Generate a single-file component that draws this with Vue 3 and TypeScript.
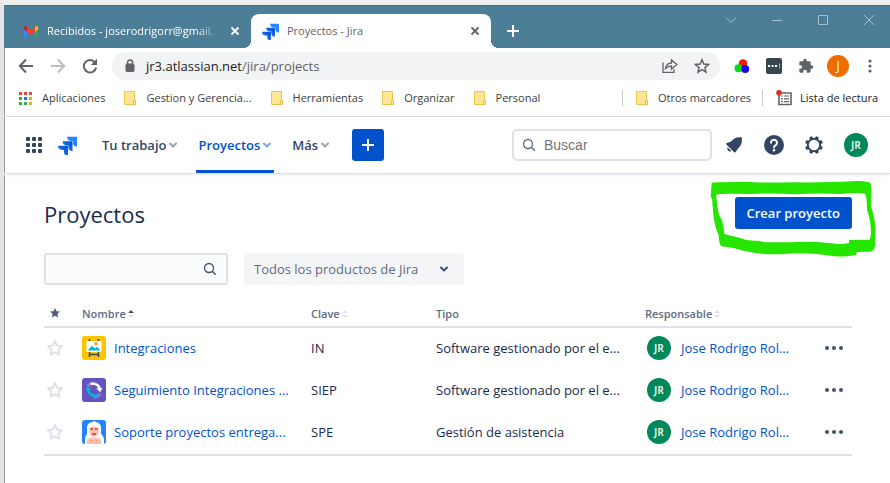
<script setup lang="ts">
import { ref } from 'vue'

interface Project {
  name: string
  key: string
  type: string
  lead: string
  art: 'easel' | 'cycle' | 'yeti'
}

const bookmarks: string[] = ['Gestion y Gerencia...', 'Herramientas', 'Organizar', 'Personal']

const projects: Project[] = [
  { name: 'Integraciones', key: 'IN', type: 'Software gestionado por el e...', lead: 'Jose Rodrigo Rol...', art: 'easel' },
  { name: 'Seguimiento Integraciones ...', key: 'SIEP', type: 'Software gestionado por el e...', lead: 'Jose Rodrigo Rol...', art: 'cycle' },
  { name: 'Soporte proyectos entrega...', key: 'SPE', type: 'Gestión de asistencia', lead: 'Jose Rodrigo Rol...', art: 'yeti' },
]

const query = ref('')
const filter = ref('')
const product = ref('all')
</script>

<template>
  <div class="window">
    <svg class="defs" aria-hidden="true">
      <defs>
        <linearGradient id="jg" x1="1" y1="0" x2="0" y2="1">
          <stop offset="0.1" stop-color="#0052cc" />
          <stop offset="0.9" stop-color="#2684ff" />
        </linearGradient>
        <symbol id="jira" viewBox="0 0 24 24">
          <path fill="#2684ff" d="M23 1H11.500a5.200 5.200 0 0 0 5.200 5.200h2.100v2A5.200 5.200 0 0 0 24 13.400V2a1 1 0 0 0-1-1z" />
          <path fill="url(#jg)" d="M17.300 6.700H5.800A5.200 5.200 0 0 0 11 11.900h2.100V14a5.200 5.200 0 0 0 5.200 5.200V7.700a1 1 0 0 0-1-1z" />
          <path fill="url(#jg)" d="M11.600 12.400H0a5.200 5.200 0 0 0 5.200 5.200h2.200v2a5.200 5.200 0 0 0 5.200 5.200V13.400a1 1 0 0 0-1-1z" />
        </symbol>
        <symbol id="folder" viewBox="0 0 12 14">
          <path d="M.5.5h10v9h1v4H.5z" fill="#ffe694" stroke="#e8c64a" />
          <path d="M9.500 13.500v-4h2" fill="none" stroke="#e8c64a" />
        </symbol>
        <symbol id="chev" viewBox="0 0 10 8">
          <path d="M2 2.500l3 3 3-3" fill="none" stroke="currentColor" stroke-width="2" stroke-linecap="round" stroke-linejoin="round" />
        </symbol>
        <symbol id="lens" viewBox="0 0 14 14">
          <circle cx="6" cy="6" r="4.500" fill="none" stroke="currentColor" stroke-width="1.300" />
          <path d="M9.500 9.500l2.800 2.800" stroke="currentColor" stroke-width="1.500" stroke-linecap="round" />
        </symbol>
        <symbol id="x" viewBox="0 0 10 10">
          <path d="M1.500 1.500l7 7M8.500 1.500l-7 7" stroke="currentColor" stroke-width="1.800" />
        </symbol>
      </defs>
    </svg>

    <div class="tabs">
      <div class="tab">
        <svg width="14" height="11" viewBox="0 0 14 11">
          <path d="M0 2v8q0 1 1 1h2V4z" fill="#4285f4" />
          <path d="M14 2v8q0 1-1 1h-2V4z" fill="#34a853" />
          <path d="M3 1v5l4 3 4-3V1L7 4z" fill="#ea4335" />
          <path d="M0 2Q0 0 1.600 0L3 1v5L0 3.500z" fill="#c5221f" />
          <path d="M14 2q0-2-1.600-2L11 1v5l3-2.500z" fill="#fbbc04" />
        </svg>
        <span class="tab-title fade">Recibidos - joserodrigorr@gmail.</span>
        <button class="tab-x" aria-label="Cerrar"><svg width="10" height="10"><use href="#x" /></svg></button>
      </div>
      <div class="tab active">
        <svg width="17" height="17"><use href="#jira" /></svg>
        <span class="tab-title">Proyectos - Jira</span>
        <button class="tab-x" aria-label="Cerrar"><svg width="10" height="10"><use href="#x" /></svg></button>
      </div>
      <button class="new-tab" aria-label="Nueva pestaña">
        <svg width="12" height="12" viewBox="0 0 12 12"><path d="M6 0v12M0 6h12" stroke="#fff" stroke-width="2" /></svg>
      </button>
      <div class="win-controls">
        <button aria-label="Buscar pestañas"><svg width="12" height="12" viewBox="0 0 12 12"><path d="M1 3.500l5 5 5-5" /></svg></button>
        <button aria-label="Minimizar"><svg width="12" height="12" viewBox="0 0 12 12"><path d="M1 6.500h10" /></svg></button>
        <button aria-label="Maximizar"><svg width="12" height="12" viewBox="0 0 12 12"><path d="M1.500 1.500h9v9h-9z" /></svg></button>
        <button aria-label="Cerrar ventana"><svg width="12" height="12" viewBox="0 0 12 12"><path d="M1 1l10 10M11 1L1 11" /></svg></button>
      </div>
    </div>

    <div class="toolbar">
      <button class="tool" aria-label="Atrás">
        <svg width="16" height="16" viewBox="0 0 16 16"><path d="M15 8H2M8 1.500L1.800 8 8 14.500" fill="none" stroke="#5f6368" stroke-width="2" /></svg>
      </button>
      <button class="tool" aria-label="Adelante">
        <svg width="16" height="16" viewBox="0 0 16 16"><path d="M1 8h13M8 1.500L14.200 8 8 14.500" fill="none" stroke="#bbbdbf" stroke-width="2" /></svg>
      </button>
      <button class="tool" aria-label="Recargar">
        <svg width="16" height="16" viewBox="0 0 16 16"><path d="M13 4.500A6.200 6.200 0 1 0 14.100 9.500" fill="none" stroke="#5f6368" stroke-width="2" /><path d="M15 .8v6.200H8.800z" fill="#5f6368" /></svg>
      </button>
      <div class="omnibox">
        <svg width="10" height="14" viewBox="0 0 10 14"><path d="M2.500 6V3.500a2.500 2.500 0 0 1 5 0V6" fill="none" stroke="#5f6368" stroke-width="1.500" /><rect x="1" y="5" width="8" height="7.500" rx="1" fill="#5f6368" stroke="#5f6368" /></svg>
        <span class="url"><b>jr3.atlassian.net</b>/jira/projects</span>
        <button class="tool" aria-label="Compartir">
          <svg width="16" height="16" viewBox="0 0 16 16" fill="none" stroke="#5f6368" stroke-width="1.300"><path d="M1 4.500v9.800h11v-3M3.500 10.500Q4.500 5 9.500 5V2l5.300 4.500L9.500 11V8Q6 8 3.500 10.500z" /></svg>
        </button>
        <button class="tool" aria-label="Marcar">
          <svg width="16" height="16" viewBox="0 0 16 16"><path d="M8 1.800l1.800 4.300 4.700.4-3.600 3.100 1.100 4.600L8 11.700l-4 2.500 1.100-4.600-3.600-3.100 4.700-.4z" fill="none" stroke="#5f6368" stroke-width="1.500" /></svg>
        </button>
      </div>
      <div class="extensions">
        <button class="tool" aria-label="Colores">
          <svg width="16" height="16" viewBox="0 0 16 16"><circle cx="9" cy="5.500" r="4.200" fill="#f01808" /><circle cx="4.500" cy="10.300" r="4" fill="#08d820" /><circle cx="11.200" cy="11" r="4" fill="#1808e8" /></svg>
        </button>
        <button class="tool" aria-label="Contraseñas">
          <svg width="16" height="16" viewBox="0 0 16 16"><rect width="16" height="16" rx="2" fill="#38474f" /><path d="M2 7h2v2H2zM5.500 7h2v2h-2zM9 7h2v2H9z" fill="#fff" /><path d="M13.500 5.500v5" stroke="#9ba3a7" /></svg>
        </button>
        <button class="tool" aria-label="Extensiones">
          <svg width="16" height="16" viewBox="0 0 24 24"><path fill="#5f6368" d="M20.500 11H19V7a2 2 0 0 0-2-2h-4V3.500a2.500 2.500 0 0 0-5 0V5H4a2 2 0 0 0-2 2v3.800h1.500a2.700 2.700 0 0 1 0 5.400H2V20a2 2 0 0 0 2 2h3.800v-1.500a2.700 2.700 0 0 1 5.400 0V22H17a2 2 0 0 0 2-2v-4h1.500a2.500 2.500 0 0 0 0-5z" /></svg>
        </button>
        <button class="profile" aria-label="Perfil">J</button>
        <button class="tool" aria-label="Menú">
          <svg width="16" height="16" viewBox="0 0 16 16" fill="#5f6368"><circle cx="8" cy="3" r="1.600" /><circle cx="8" cy="8" r="1.600" /><circle cx="8" cy="13" r="1.600" /></svg>
        </button>
      </div>
    </div>

    <nav class="bookmarks">
      <a href="#" class="apps">
        <svg width="13" height="13" viewBox="0 0 13 13">
          <path d="M0 0h3v3H0zM5 0h3v3H5zM10 0h3v3h-3z" fill="#ea4335" />
          <path d="M0 5h3v3H0zM0 10h3v3H0z" fill="#34a853" />
          <path d="M5 5h3v3H5z" fill="#1a73e8" />
          <path d="M10 5h3v3h-3zM10 10h3v3h-3z" fill="#f9ab00" />
          <path d="M5 10h3v3H5z" fill="#34a853" />
        </svg>Aplicaciones
      </a>
      <a v-for="b in bookmarks" :key="b" href="#"><svg width="12" height="14"><use href="#folder" /></svg>{{ b }}</a>
      <span class="push sep"></span>
      <a href="#" class="other"><svg width="12" height="14"><use href="#folder" /></svg>Otros marcadores</a>
      <span class="sep"></span>
      <a href="#" class="reading">
        <svg width="16" height="16" viewBox="0 0 16 16"><path d="M3 3h12v11.500H3z" fill="none" stroke="#5f6368" stroke-width="1.600" /><path d="M5 6h2M8 6h5M5 8.800h2M8 8.800h5M5 11.600h2M8 11.600h5" stroke="#5f6368" stroke-width="1.200" /><circle cx="3" cy="2.800" r="2.800" fill="#d93025" /></svg>Lista de lectura
      </a>
    </nav>

    <header class="jira-nav">
      <button class="icon-btn" aria-label="Cambiar a">
        <svg width="16" height="16" viewBox="0 0 16 16" fill="#344563">
          <g v-for="r in 3" :key="r"><rect v-for="c in 3" :key="c" :x="(c - 1) * 6" :y="(r - 1) * 6" width="4" height="4" rx="1" /></g>
        </svg>
      </button>
      <a href="#" class="logo" aria-label="Jira"><svg width="19" height="19"><use href="#jira" /></svg></a>
      <div class="menus">
        <a href="#">Tu trabajo<svg width="10" height="8"><use href="#chev" /></svg></a>
        <a href="#" class="current">Proyectos<svg width="10" height="8"><use href="#chev" /></svg></a>
        <a href="#">Más<svg width="10" height="8"><use href="#chev" /></svg></a>
      </div>
      <button class="create" aria-label="Crear">
        <svg width="12" height="12" viewBox="0 0 12 12"><path d="M6 0v12M0 6h12" stroke="#fff" stroke-width="2" /></svg>
      </button>
      <label class="search">
        <svg width="14" height="14"><use href="#lens" /></svg>
        <input v-model="query" type="text" placeholder="Buscar" aria-label="Buscar" />
      </label>
      <div class="actions">
        <button class="icon-btn" aria-label="Notificaciones">
          <svg width="20" height="20" viewBox="0 0 20 20" fill="#344563"><path d="M17.800 2.200q.4 3.500-.3 6Q16.500 11.500 14 13.500l-2.300 3.600q-.7.900-1.500.1L2.600 9.700q-1.200-1.400.4-1.700L7 6.600q2.300-3.200 5.800-4 2.500-.6 5-.4z" /><path d="M3.500 12.200l3.900 3.800q-1.800 1.200-3.200-.3-1.300-1.500-.7-3.500z" /></svg>
        </button>
        <button class="icon-btn" aria-label="Ayuda">
          <svg width="20" height="20" viewBox="0 0 20 20"><circle cx="10" cy="10" r="10" fill="#344563" /><path d="M7 7.800a3 3 0 1 1 4.500 2.600q-1.500.8-1.500 2" fill="none" stroke="#fff" stroke-width="2" stroke-linecap="round" /><circle cx="10" cy="15.200" r="1.200" fill="#fff" /></svg>
        </button>
        <button class="icon-btn" aria-label="Configuración">
          <svg width="20" height="20" viewBox="0 0 20 20"><circle cx="10" cy="10" r="6.200" fill="none" stroke="#344563" stroke-width="2" /><g fill="#344563"><rect v-for="a in 8" :key="a" x="8.300" y="1" width="3.400" height="3.400" rx="1" :transform="`rotate(${a * 45 - 22.5} 10 10)`" /></g></svg>
        </button>
        <button class="avatar" aria-label="Tu perfil">JR</button>
      </div>
    </header>

    <main>
      <div class="heading">
        <h1>Proyectos</h1>
        <div class="highlighted">
          <button class="primary">Crear proyecto</button>
          <svg class="marker" width="172" height="81" viewBox="204 189 516 243" aria-hidden="true">
            <path fill="#26e600" fill-rule="evenodd" d="M212 203Q230 200 330 201Q360 204 460 202Q560 203 630 199Q660 196 685 202Q691 206 691 225L690 275Q700 300 704 340L703 385Q702 405 690 410L648 411L645 420Q600 429 560 421Q500 412 440 416Q370 422 310 408Q280 398 240 394Q234 385 233 360Q222 340 217 300L213 250L209 247ZM225 240Q232 236 260 236L330 237Q400 233 460 238Q530 234 600 237Q650 231 672 236Q678 245 678 285Q688 310 690 345Q691 365 686 374L624 375L624 384Q600 390 570 385Q500 378 450 382L372 382L350 377Q320 379 295 368Q260 360 250 357Q248 330 241 312Q232 300 229 270Z" />
          </svg>
        </div>
      </div>

      <div class="filters">
        <label class="filter">
          <input v-model="filter" type="text" aria-label="Buscar proyectos" />
          <svg width="14" height="14"><use href="#lens" /></svg>
        </label>
        <label class="product">
          <select v-model="product" aria-label="Productos">
            <option value="all">Todos los productos de Jira</option>
          </select>
          <svg width="10" height="8"><use href="#chev" /></svg>
        </label>
      </div>

      <table>
        <colgroup><col class="c-star" /><col /><col class="c-key" /><col class="c-type" /><col class="c-lead" /><col class="c-more" /></colgroup>
        <thead>
          <tr>
            <th class="star-head" aria-label="Favorito"><svg width="10" height="10" viewBox="0 0 10 10"><path d="M5 0l1.500 3.200 3.500.4-2.600 2.300.7 3.600L5 7.800 1.900 9.500l.7-3.600L0 3.600l3.500-.4z" fill="#505f79" /></svg></th>
            <th>Nombre<svg class="sort up" width="6" height="8" viewBox="0 0 6 8"><path d="M0 3l3-3 3 3z" /><path d="M0 5l3 3 3-3z" /></svg></th>
            <th>Clave<svg class="sort" width="6" height="8" viewBox="0 0 6 8"><path d="M0 3l3-3 3 3z" /><path d="M0 5l3 3 3-3z" /></svg></th>
            <th>Tipo</th>
            <th>Responsable<svg class="sort" width="6" height="8" viewBox="0 0 6 8"><path d="M0 3l3-3 3 3z" /><path d="M0 5l3 3 3-3z" /></svg></th>
            <th></th>
          </tr>
        </thead>
        <tbody>
          <tr v-for="p in projects" :key="p.key">
            <td>
              <button class="star" aria-label="Añadir a favoritos">
                <svg width="18" height="18" viewBox="0 0 18 18"><path d="M9 2l2.100 4.600 4.900.6-3.600 3.500.9 5L9 13.300l-4.300 2.400.9-5L2 7.200l4.900-.6z" fill="none" stroke="#dfe1e6" stroke-width="2" stroke-linejoin="round" /></svg>
              </button>
            </td>
            <td>
              <a href="#" class="cell">
                <svg v-if="p.art === 'easel'" width="24" height="24" viewBox="0 0 24 24">
                  <rect width="24" height="24" rx="3" fill="#ffc400" />
                  <path d="M7.500 3v18M16.500 3v18M7 18.500h10" stroke="#344563" stroke-width="1.500" />
                  <rect x="4.500" y="5" width="15" height="11" rx="1" fill="#fff" />
                  <circle cx="14" cy="7.700" r="1.700" fill="#ff991f" />
                  <path d="M5.800 14.500L9 10.500q1-1 2 0l2 2 1-1q1-.8 2 0l2.200 3z" fill="#00b8d9" />
                </svg>
                <svg v-else-if="p.art === 'cycle'" width="24" height="24" viewBox="0 0 24 24">
                  <rect width="24" height="24" rx="3" fill="#6554c0" />
                  <path d="M5.500 8.500Q8 4.500 12.500 5M18.500 15.500Q16 19.500 11.500 19" fill="none" stroke="#8777d9" stroke-width="2.800" />
                  <path d="M8.500 6Q16 4.500 17.800 11" fill="none" stroke="#fff" stroke-width="2.600" /><path d="M14.200 10.500l6.300-.8-2.300 4.500z" fill="#fff" />
                  <path d="M6.200 12Q7.500 18.500 15.500 17.800" fill="none" stroke="#00b8d9" stroke-width="2.600" /><path d="M3.500 13l2-4.500 4 3.500z" fill="#00b8d9" />
                </svg>
                <svg v-else width="24" height="24" viewBox="0 0 24 24">
                  <rect width="24" height="24" rx="3" fill="#2684ff" />
                  <path d="M3 24v-5q0-3 2-5V8q0-5 5-6l3-1 1 1q5 1 5 6v6q3 2 3 5v5z" fill="#fff" />
                  <path d="M7.500 7.500q4.500-2 9 0v5q0 4-4.500 4t-4.500-4z" fill="#ffbdad" />
                  <path d="M8.500 9h2.500M13 9h2.500M10 14h4" stroke="#de350b" stroke-width="1.300" />
                  <path d="M5 24v-4q1-2.500 7-2.500t7 2.500v4z" fill="#ffbdad" />
                  <path d="M8.500 20.500h2M13.500 20.500h2" stroke="#ff8f73" />
                </svg>
                <span>{{ p.name }}</span>
              </a>
            </td>
            <td>{{ p.key }}</td>
            <td>{{ p.type }}</td>
            <td><a href="#" class="cell lead"><span class="avatar">JR</span><span>{{ p.lead }}</span></a></td>
            <td>
              <button class="more" aria-label="Más acciones">
                <svg width="18" height="4" viewBox="0 0 18 4" fill="#42526e"><circle cx="2" cy="2" r="2" /><circle cx="9" cy="2" r="2" /><circle cx="16" cy="2" r="2" /></svg>
              </button>
            </td>
          </tr>
        </tbody>
      </table>
    </main>
  </div>
</template>

<style>
body {
  background: #fff;
}
</style>

<style scoped>
* {
  box-sizing: border-box;
}
.window {
  min-height: 100vh;
  border-left: 4px solid #e4e4e4;
  border-top: 5px solid #eeeeee;
  box-shadow: inset 1px 0 #9a9a9a;
  font-family: 'Open Sans', 'Noto Sans', sans-serif;
  font-size: 13px;
  line-height: 20px;
  color: #172b4d;
}
.defs {
  position: absolute;
  width: 0;
  height: 0;
}
svg {
  display: block;
  flex: none;
}
button {
  display: flex;
  align-items: center;
  justify-content: center;
  border: 0;
  padding: 0;
  background: none;
  font: inherit;
  color: inherit;
}
a {
  color: inherit;
  text-decoration: none;
}

.tabs {
  display: flex;
  align-items: flex-end;
  height: 43px;
  padding-left: 7px;
  background: #4d7e98;
  border-top: 1px solid #446f86;
  font-size: 11px;
}
.tab {
  position: relative;
  display: flex;
  align-items: center;
  gap: 9px;
  flex: 0 1 240px;
  min-width: 0;
  height: 34px;
  padding: 0 10px 0 13px;
  border-radius: 8px 8px 0 0;
  color: #fff;
}
.tab.active {
  gap: 8px;
  padding-left: 11px;
  background: #fff;
  color: #5f6368;
}
.tab.active::before,
.tab.active::after {
  content: '';
  position: absolute;
  bottom: 0;
  width: 8px;
  height: 8px;
}
.tab.active::before {
  right: 100%;
  background: radial-gradient(circle at 0 0, transparent 8px, #fff 8px);
}
.tab.active::after {
  left: 100%;
  background: radial-gradient(circle at 100% 0, transparent 8px, #fff 8px);
}
.tab-title {
  flex: 1;
  overflow: hidden;
  white-space: nowrap;
}
.fade {
  mask-image: linear-gradient(to right, #000 86%, transparent);
}
.tab-x {
  width: 12px;
  height: 20px;
}
.new-tab {
  width: 28px;
  height: 34px;
  margin-left: 8px;
}
.win-controls {
  display: flex;
  align-self: flex-start;
  margin-left: auto;
  margin-right: -2px;
}
.win-controls button {
  width: 46px;
  height: 28px;
}
.win-controls path {
  fill: none;
  stroke: #a6bfcc;
}

.toolbar {
  display: flex;
  align-items: center;
  height: 36px;
  padding: 0 4px 0 6px;
}
.tool {
  width: 32px;
  height: 28px;
}
.omnibox {
  display: flex;
  align-items: center;
  flex: 1;
  height: 28px;
  margin-left: 6px;
  padding: 0 2px 0 13px;
  border-radius: 14px;
  background: #f1f3f4;
}
.url {
  flex: 1;
  margin-left: 11px;
  font-size: 13px;
  color: #5f6368;
}
.url b {
  font-weight: 400;
  color: #202124;
}
.extensions {
  display: flex;
  align-items: center;
  margin-left: 6px;
}
.profile {
  width: 22px;
  height: 22px;
  margin: 0 5px;
  border-radius: 50%;
  background: #ef6c00;
  color: #fff;
  font-size: 12px;
}

.bookmarks {
  display: flex;
  align-items: center;
  gap: 19px;
  height: 33px;
  padding: 0 12px 4px 15px;
  border-bottom: 1px solid #d8dadc;
  font-size: 11px;
  color: #3c4043;
  white-space: nowrap;
}
.bookmarks a {
  display: flex;
  align-items: center;
  gap: 10px;
}
.sep {
  width: 1px;
  height: 16px;
  background: #c8cacc;
}
.push {
  margin-left: auto;
}
.bookmarks .sep + a {
  margin-left: -6px;
}
.bookmarks .other {
  margin-right: -8px;
}
.bookmarks .reading {
  margin-left: -8px;
  gap: 8px;
  color: #202124;
}

.jira-nav {
  display: flex;
  align-items: center;
  height: 57px;
  padding: 0 22px;
  border-bottom: 1px solid #dcdfe5;
  box-shadow: 0 2px 2px #f1f2f4;
  color: #344563;
}
.logo {
  margin-left: 16px;
}
.menus {
  display: flex;
  align-self: stretch;
  gap: 16px;
  margin-left: 23px;
  font-size: 13px;
  font-weight: 600;
}
.menus a {
  display: flex;
  align-items: center;
  gap: 2px;
  padding: 3px 2px 0;
  border-bottom: 3px solid transparent;
}
.menus svg {
  opacity: 0.5;
}
.menus .current {
  color: #0052cc;
  border-color: #0052cc;
  border-radius: 1px;
}
.create {
  width: 32px;
  height: 32px;
  margin-left: 20px;
  border-radius: 3px;
  background: #0052cc;
}
.search {
  display: flex;
  align-items: center;
  gap: 8px;
  width: 200px;
  height: 32px;
  margin-left: auto;
  padding: 0 8px;
  border: 2px solid #dfe1e6;
  border-radius: 5px;
  color: #5e6c84;
}
.search input {
  width: 100%;
  min-width: 0;
  border: 0;
  padding: 0;
  outline: 0;
  background: none;
  font: 14px 'Liberation Sans', sans-serif;
}
input::placeholder {
  color: #757575;
  opacity: 1;
}
.actions {
  display: flex;
  align-items: center;
  gap: 20px;
  margin-left: 12px;
}
.avatar {
  display: flex;
  align-items: center;
  justify-content: center;
  flex: none;
  width: 24px;
  height: 24px;
  border-radius: 50%;
  background: #00875a;
  color: #d5ebe3;
  font-size: 10px;
  font-weight: 700;
}

main {
  padding: 23px 38px 0 40px;
}
.heading {
  display: flex;
  align-items: flex-start;
  justify-content: space-between;
  height: 56px;
}
h1 {
  margin: 3px 0 0;
  font-size: 22px;
  line-height: 28px;
  font-weight: 500;
}
.highlighted {
  position: relative;
}
.primary {
  height: 32px;
  padding: 0 12px;
  border-radius: 3px;
  background: #0052cc;
  color: #fff;
  font-weight: 600;
}
.marker {
  position: absolute;
  left: -26px;
  top: -19px;
  pointer-events: none;
}
.filters {
  display: flex;
  gap: 16px;
}
.filter {
  display: flex;
  align-items: center;
  width: 184px;
  height: 32px;
  padding: 0 9px 0 8px;
  border: 2px solid #dfe1e6;
  border-radius: 3px;
  background: #fafbfc;
  color: #42526e;
}
.filter input {
  flex: 1;
  min-width: 0;
  border: 0;
  padding: 0;
  outline: 0;
  background: none;
  font: inherit;
}
.product {
  display: flex;
  align-items: center;
  width: 220px;
  padding: 0 15px 0 10px;
  border-radius: 3px;
  background: #f4f5f7;
  color: #42526e;
}
.product select {
  flex: 1;
  min-width: 0;
  appearance: none;
  border: 0;
  padding: 0;
  background: none;
  font: inherit;
  color: #5e6c84;
}

table {
  width: 100%;
  margin-top: 15px;
  table-layout: fixed;
  border-collapse: separate;
  border-spacing: 0;
  border-bottom: 2px solid #dfe1e6;
}
.c-star {
  width: 38px;
}
.c-key {
  width: 125px;
}
.c-type {
  width: 209px;
}
.c-lead {
  width: 177px;
}
.c-more {
  width: 30px;
}
th {
  height: 28px;
  padding: 2px 0 0;
  border-bottom: 2px solid #dfe1e6;
  text-align: left;
  font-size: 11px;
  line-height: 20px;
  font-weight: 600;
  color: #5e6c84;
}
th svg {
  display: inline-block;
}
.star-head {
  padding-left: 6px;
}
.sort {
  margin-left: 2px;
  fill: #dfe1e6;
}
.sort.up path:first-child {
  fill: #42526e;
}
td {
  height: 42px;
  padding: 8px 0 10px;
  white-space: nowrap;
}
.cell {
  display: flex;
  align-items: center;
  gap: 8px;
  color: #0052cc;
}
.lead {
  gap: 10px;
  padding-left: 2px;
}
.star {
  margin-left: 2px;
}
.more {
  margin-left: 3px;
}
</style>
